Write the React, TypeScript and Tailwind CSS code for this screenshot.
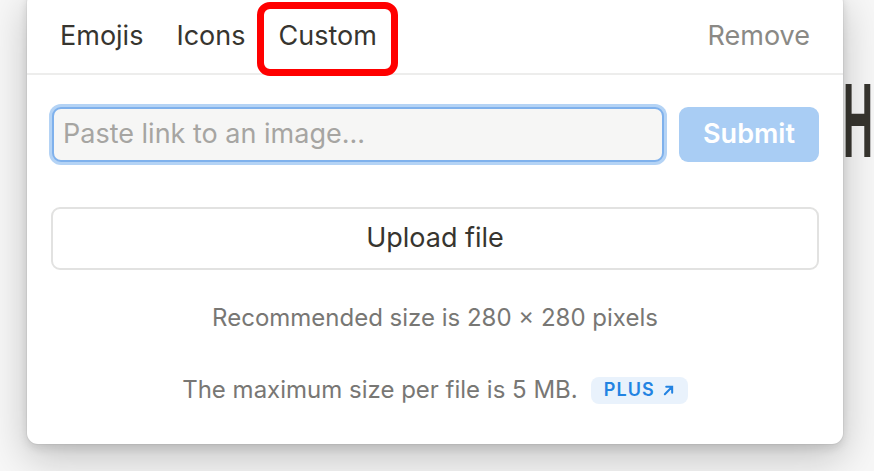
import React from "react";

export default function App() {
  return (
    <div className="relative w-[874px] h-[471px] overflow-hidden bg-[#f7f7f7] font-['Inter',sans-serif]">
      {/* page content behind the popover */}
      <div className="absolute left-[843px] top-[71px] text-[100px] leading-[100px] font-bold text-[#37352f] select-none">
        <span className="inline-block origin-left scale-x-[0.4]">H</span>
      </div>
      {/* popover */}
      <div className="relative ml-[27px] -mt-[8px] w-[816px] h-[452px] rounded-[11px] bg-white shadow-[0_0_0_1px_rgba(15,15,15,0.04),0_4px_10px_rgba(15,15,15,0.12),0_14px_40px_rgba(15,15,15,0.22)] flex flex-col">
        <div className="flex items-center justify-between pt-[26px] pb-[19px] px-[33px] border-b-2 border-[#ededec]">
          <div className="flex items-center gap-[33px] text-[27px] leading-[36px] text-[#37352f]">
            <span>Emojis</span>
            <span>Icons</span>
            <span className="relative">
              Custom
              <span className="absolute -left-[21px] -right-[21px] -top-[16px] bottom-[-22px] border-[7px] border-[#ff0000] rounded-[13px]" />
            </span>
          </div>
          <span className="text-[27px] leading-[36px] text-[#8a8985]">Remove</span>
        </div>
        <div className="flex flex-col px-[24px] pt-[32px]">
          <div className="flex items-center gap-[15px]">
            <div className="flex-1 h-[55px] rounded-[9px] border-2 border-[#7fb1ec] ring-[3px] ring-[#b4d3f5] bg-[#f6f6f5] flex items-center px-[9px] ml-[1px]">
              <span className="text-[27px] text-[#a6a5a2]">Paste link to an image...</span>
            </div>
            <div className="w-[140px] h-[55px] rounded-[9px] bg-[#a9cdf4] flex items-center justify-center text-[27px] font-semibold text-white">
              Submit
            </div>
          </div>
          <div className="mt-[45px] h-[63px] rounded-[9px] border-2 border-[#e2e2e1] flex items-center justify-center text-[27px] text-[#37352f]">
            Upload file
          </div>
          <div className="mt-[33px] text-center text-[24px] leading-[30px] text-[#787774]">
            Recommended size is 280 × 280 pixels
          </div>
          <div className="mt-[42px] flex items-center justify-center gap-[13px] text-[24px] leading-[30px] text-[#787774]">
            <span>The maximum size per file is 5 MB.</span>
            <span className="flex items-center gap-[8px] h-[27px] pl-[13px] pr-[14px] rounded-[8px] bg-[#e9f2fc] text-[18px] font-semibold tracking-[0.06em] text-[#2383e2]">
              PLUS
              <svg width="11" height="11" viewBox="0 0 12 12" fill="none" stroke="#2383e2" strokeWidth="2.2" strokeLinecap="round">
                <path d="M2 10L10 2M3.5 2H10v6.5" />
              </svg>
            </span>
          </div>
        </div>
      </div>
    </div>
  );
}
